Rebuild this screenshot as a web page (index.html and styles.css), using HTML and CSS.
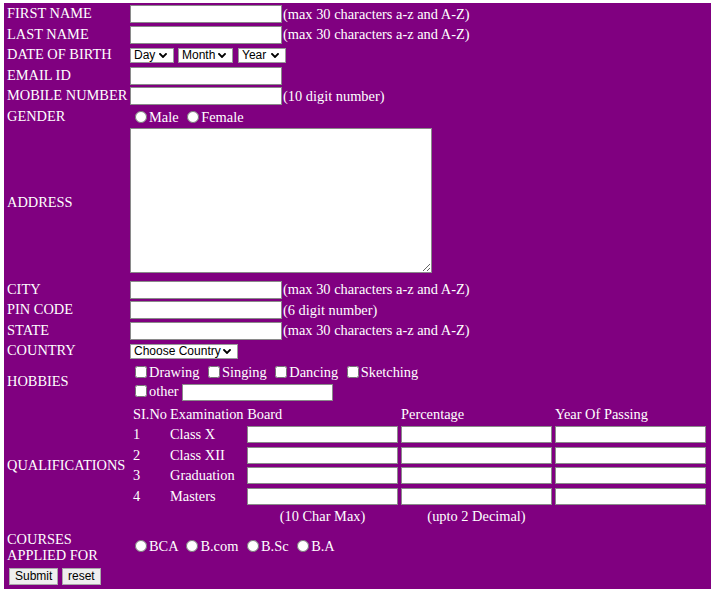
FILE: index.html
```html
<!DOCTYPE html>
<html>
<head>
<meta charset="utf-8">
<title>Registration Form</title>
<link rel="stylesheet" href="styles.css">
</head>
<body>
<form class="reg">
<table class="form">
  <tr>
    <td class="lbl">FIRST NAME</td>
    <td class="val"><div class="fld"><input type="text" class="txt"><span class="hint">(max 30 characters a-z and A-Z)</span></div></td>
  </tr>
  <tr>
    <td class="lbl">LAST NAME</td>
    <td class="val"><div class="fld"><input type="text" class="txt"><span class="hint">(max 30 characters a-z and A-Z)</span></div></td>
  </tr>
  <tr>
    <td class="lbl">DATE OF BIRTH</td>
    <td class="val"><div class="fld">
      <span class="selbox sel-day"><select class="sel"><option>Day</option></select><svg class="chev" viewBox="0 0 8 5"><path d="M1 1 L4 4 L7 1"/></svg></span>
      <span class="selbox sel-month"><select class="sel"><option>Month</option></select><svg class="chev" viewBox="0 0 8 5"><path d="M1 1 L4 4 L7 1"/></svg></span>
      <span class="selbox sel-year"><select class="sel"><option>Year</option></select><svg class="chev" viewBox="0 0 8 5"><path d="M1 1 L4 4 L7 1"/></svg></span>
    </div></td>
  </tr>
  <tr>
    <td class="lbl">EMAIL ID</td>
    <td class="val"><div class="fld"><input type="text" class="txt"></div></td>
  </tr>
  <tr>
    <td class="lbl">MOBILE NUMBER</td>
    <td class="val"><div class="fld"><input type="text" class="txt"><span class="hint">(10 digit number)</span></div></td>
  </tr>
  <tr>
    <td class="lbl">GENDER</td>
    <td class="val"><div class="opts"><input type="radio" name="g" class="rd">Male <input type="radio" name="g" class="rd">Female</div></td>
  </tr>
  <tr>
    <td class="lbl">ADDRESS</td>
    <td class="val"><textarea class="addr"></textarea></td>
  </tr>
  <tr>
    <td class="lbl">CITY</td>
    <td class="val"><div class="fld"><input type="text" class="txt"><span class="hint">(max 30 characters a-z and A-Z)</span></div></td>
  </tr>
  <tr>
    <td class="lbl">PIN CODE</td>
    <td class="val"><div class="fld"><input type="text" class="txt"><span class="hint">(6 digit number)</span></div></td>
  </tr>
  <tr>
    <td class="lbl">STATE</td>
    <td class="val"><div class="fld"><input type="text" class="txt"><span class="hint">(max 30 characters a-z and A-Z)</span></div></td>
  </tr>
  <tr>
    <td class="lbl">COUNTRY</td>
    <td class="val"><div class="fld"><span class="selbox sel-country"><select class="sel"><option>Choose Country</option></select><svg class="chev" viewBox="0 0 8 5"><path d="M1 1 L4 4 L7 1"/></svg></span></div></td>
  </tr>
  <tr>
    <td class="lbl">HOBBIES</td>
    <td class="val">
      <div class="opts hob"><input type="checkbox" class="cb">Drawing <input type="checkbox" class="cb">Singing <input type="checkbox" class="cb">Dancing <input type="checkbox" class="cb">Sketching</div>
      <div class="opts hob"><input type="checkbox" class="cb">other <input type="text" class="txt other"></div>
    </td>
  </tr>
  <tr>
    <td class="lbl">QUALIFICATIONS</td>
    <td class="val">
      <table class="qual">
        <tr><td class="no">SI.No</td><td colspan="2">Examination Board</td><td>Percentage</td><td>Year Of Passing</td></tr>
        <tr><td class="no">1</td><td class="exam">Class X</td><td class="box"><input type="text" class="qin"></td><td class="box"><input type="text" class="qin"></td><td class="box"><input type="text" class="qin"></td></tr>
        <tr><td class="no">2</td><td class="exam">Class XII</td><td class="box"><input type="text" class="qin"></td><td class="box"><input type="text" class="qin"></td><td class="box"><input type="text" class="qin"></td></tr>
        <tr><td class="no">3</td><td class="exam">Graduation</td><td class="box"><input type="text" class="qin"></td><td class="box"><input type="text" class="qin"></td><td class="box"><input type="text" class="qin"></td></tr>
        <tr><td class="no">4</td><td class="exam">Masters</td><td class="box"><input type="text" class="qin"></td><td class="box"><input type="text" class="qin"></td><td class="box"><input type="text" class="qin"></td></tr>
        <tr><td></td><td></td><td class="note">(10 Char Max)</td><td class="note">(upto 2 Decimal)</td><td></td></tr>
      </table>
    </td>
  </tr>
  <tr>
    <td class="lbl wrap">COURSES<br>APPLIED FOR</td>
    <td class="val"><div class="opts"><input type="radio" name="c" class="rd">BCA <input type="radio" name="c" class="rd">B.com <input type="radio" name="c" class="rd">B.Sc <input type="radio" name="c" class="rd">B.A</div></td>
  </tr>
  <tr class="btnrow">
    <td class="lbl"><input type="submit" value="Submit" class="btn btn-first"> <input type="reset" value="reset" class="btn"></td>
    <td class="val"></td>
  </tr>
</table>
</form>
</body>
</html>
```

FILE: styles.css
```css
html, body {
  margin: 0;
  padding: 0;
  background: #ffffff;
}

body {
  font-family: "Liberation Serif", "Times New Roman", serif;
  font-size: 14.4px;
  color: #ffffff;
}

.reg {
  margin: 0;
  padding: 3px 0 0 4px;
}

.form {
  background: #800080;
  border-collapse: separate;
  border-spacing: 2px;
}

.form td {
  padding: 0;
  vertical-align: middle;
}

.form td.lbl {
  width: 121px;
  padding: 0 0 2px 1px;
  white-space: nowrap;
  line-height: 16px;
}

.form td.wrap {
  padding-bottom: 0;
  line-height: 16px;
}

.btnrow td.lbl {
  padding-bottom: 0;
}

.fld {
  display: flex;
  align-items: center;
  height: 18.5px;
  white-space: nowrap;
}

.hint {
  margin-left: 1px;
}

.txt {
  box-sizing: border-box;
  width: 152px;
  height: 18px;
  margin: 0;
  padding: 0 2px;
  border: 1px solid #8a8a8a;
  background: #ffffff;
  font: 12px "Liberation Sans", Arial, sans-serif;
}

.selbox {
  position: relative;
  display: inline-block;
  height: 15px;
}

.sel {
  -webkit-appearance: none;
  appearance: none;
  display: block;
  box-sizing: border-box;
  width: 100%;
  height: 15px;
  margin: 0;
  padding: 0 0 0 3px;
  border: 1px solid #9a9a9a;
  border-radius: 0;
  background: #ffffff;
  color: #000000;
  font: 12px/13px "Liberation Sans", Arial, sans-serif;
  outline: none;
}

.chev {
  position: absolute;
  right: 7px;
  top: 5px;
  width: 8px;
  height: 5px;
  fill: none;
  stroke: #000000;
  stroke-width: 1.9;
  stroke-linecap: square;
  pointer-events: none;
}

.sel-day { width: 44px; margin-right: 4px; }
.sel-month { width: 55px; margin-right: 5px; }
.sel-year { width: 48px; }
.sel-country { width: 108px; }

.opts {
  height: 18.5px;
  line-height: 18.5px;
  white-space: nowrap;
}

.opts.hob {
  height: 19px;
  line-height: 19px;
}

.rd, .cb {
  width: 12px;
  height: 12px;
  margin: 0 2px 0 5px;
  vertical-align: -1px;
}

.other {
  width: 151px;
  height: 17px;
  vertical-align: middle;
}

.addr {
  display: block;
  box-sizing: border-box;
  width: 302px;
  height: 145px;
  margin: 0 0 5.5px 0;
  padding: 2px;
  border: 1px solid #8a8a8a;
  background: #ffffff;
}

.qual {
  border-collapse: separate;
  border-spacing: 3px;
}

.qual td {
  padding: 0;
  height: 17.5px;
  white-space: nowrap;
  vertical-align: middle;
}

.qual td.no { width: 34px; }
.qual td.exam { width: 74px; }
.qual td.box { width: 151px; }
.qual td.note { text-align: center; }

.qin {
  display: block;
  box-sizing: border-box;
  width: 151px;
  height: 17px;
  margin: 0;
  padding: 0 2px;
  border: 1px solid #8a8a8a;
  background: #ffffff;
}

.btnrow td {
  height: 22px;
}

.btn {
  box-sizing: border-box;
  height: 17px;
  margin: 0;
  padding: 0 5px;
  border: 1px solid #a9a9a9;
  border-radius: 0;
  background: #efefef;
  color: #000000;
  font: 12px "Liberation Sans", Arial, sans-serif;
  vertical-align: middle;
}

.btn-first {
  margin-left: 2px;
}
```
